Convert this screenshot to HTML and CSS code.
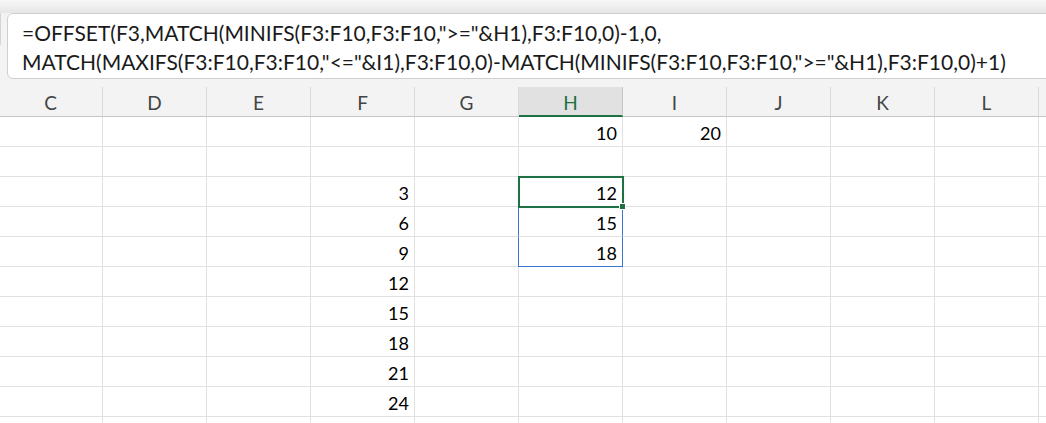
FILE: index.html
```html
<!DOCTYPE html>
<html>
<head>
<meta charset="utf-8">
<link rel="stylesheet" href="styles.css">
</head>
<body>
<div class="app">
  <div class="topstrip"></div>
  <div class="fbar">
    <div class="namebox"></div>
    <div class="formula">=OFFSET(F3,MATCH(MINIFS(F3:F10,F3:F10,"&gt;="&amp;H1),F3:F10,0)-1,0,<br>MATCH(MAXIFS(F3:F10,F3:F10,"&lt;="&amp;I1),F3:F10,0)-MATCH(MINIFS(F3:F10,F3:F10,"&gt;="&amp;H1),F3:F10,0)+1)</div>
  </div>
  <div class="sheet">
    <div class="hdr">C</div><div class="hdr">D</div><div class="hdr">E</div><div class="hdr">F</div><div class="hdr">G</div><div class="hdr hsel">H</div><div class="hdr">I</div><div class="hdr">J</div><div class="hdr">K</div><div class="hdr">L</div><div class="hdr"></div>

    <div class="c"></div><div class="c"></div><div class="c"></div><div class="c"></div><div class="c"></div><div class="c">10</div><div class="c">20</div><div class="c"></div><div class="c"></div><div class="c"></div><div class="c"></div>
    <div class="c"></div><div class="c"></div><div class="c"></div><div class="c"></div><div class="c"></div><div class="c"></div><div class="c"></div><div class="c"></div><div class="c"></div><div class="c"></div><div class="c"></div>
    <div class="c"></div><div class="c"></div><div class="c"></div><div class="c">3</div><div class="c"></div><div class="c active">12<span class="handle"></span></div><div class="c"></div><div class="c"></div><div class="c"></div><div class="c"></div><div class="c"></div>
    <div class="c"></div><div class="c"></div><div class="c"></div><div class="c">6</div><div class="c"></div><div class="c spill">15</div><div class="c"></div><div class="c"></div><div class="c"></div><div class="c"></div><div class="c"></div>
    <div class="c"></div><div class="c"></div><div class="c"></div><div class="c">9</div><div class="c"></div><div class="c spill spill-end">18</div><div class="c"></div><div class="c"></div><div class="c"></div><div class="c"></div><div class="c"></div>
    <div class="c"></div><div class="c"></div><div class="c"></div><div class="c">12</div><div class="c"></div><div class="c"></div><div class="c"></div><div class="c"></div><div class="c"></div><div class="c"></div><div class="c"></div>
    <div class="c"></div><div class="c"></div><div class="c"></div><div class="c">15</div><div class="c"></div><div class="c"></div><div class="c"></div><div class="c"></div><div class="c"></div><div class="c"></div><div class="c"></div>
    <div class="c"></div><div class="c"></div><div class="c"></div><div class="c">18</div><div class="c"></div><div class="c"></div><div class="c"></div><div class="c"></div><div class="c"></div><div class="c"></div><div class="c"></div>
    <div class="c"></div><div class="c"></div><div class="c"></div><div class="c">21</div><div class="c"></div><div class="c"></div><div class="c"></div><div class="c"></div><div class="c"></div><div class="c"></div><div class="c"></div>
    <div class="c"></div><div class="c"></div><div class="c"></div><div class="c">24</div><div class="c"></div><div class="c"></div><div class="c"></div><div class="c"></div><div class="c"></div><div class="c"></div><div class="c"></div>
    <div class="c"></div><div class="c"></div><div class="c"></div><div class="c"></div><div class="c"></div><div class="c"></div><div class="c"></div><div class="c"></div><div class="c"></div><div class="c"></div><div class="c"></div>
  </div>
</div>
</body>
</html>
```

FILE: styles.css
```css
html, body {
  margin: 0;
  padding: 0;
  background: #ffffff;
  overflow: hidden;
}
.app {
  width: 1046px;
  height: 423px;
  overflow: hidden;
  font-family: "Lato", "Liberation Sans", sans-serif;
  color: #000;
}
.topstrip {
  height: 13px;
  background: linear-gradient(#f7f7f7, #e6e6e6);
}
.fbar {
  display: flex;
  background: #f3f3f3;
  padding-bottom: 8px;
  gap: 6px;
}
.namebox {
  width: 1px;
  height: 32px;
  border-right: 1px solid #d4d4d4;
  border-bottom: 1px solid #d4d4d4;
  border-bottom-right-radius: 4px;
  background: #fff;
  box-sizing: border-box;
}
.formula {
  flex: 1;
  margin-right: -20px;
  background: #fff;
  border: 1px solid #cfcfcf;
  border-radius: 6px;
  box-sizing: border-box;
  height: 66px;
  padding: 4px 0 0 14px;
  font-size: 21px;
  line-height: 29px;
  white-space: nowrap;
  color: #1a1a1a;
}
.sheet {
  display: grid;
  grid-template-columns: repeat(11, 104px);
  grid-auto-rows: 30px;
  margin-left: -1px;
  background: #fff;
}
.hdr {
  background: #f3f3f3;
  border-right: 1px solid #dadada;
  border-bottom: 1px solid #c6c6c6;
  box-sizing: border-box;
  display: flex;
  align-items: center;
  justify-content: center;
  font-size: 19px;
  color: #444;
  padding-top: 1px;
}
.hsel {
  background: #e1e1e1;
  color: #1e7145;
  border-bottom: 2px solid #1e7145;
  border-right-color: #c6c6c6;
  padding-top: 2px;
}
.c {
  position: relative;
  border-right: 1px solid #e1e1e1;
  border-bottom: 1px solid #e1e1e1;
  box-sizing: border-box;
  display: flex;
  align-items: center;
  justify-content: flex-end;
  padding-right: 5px;
  font-size: 18px;
  padding-top: 2px;
}
.active {
  outline: 2px solid #1e7145;
  outline-offset: -1px;
  z-index: 2;
  box-shadow: 0 0 4px rgba(0,0,0,0.12);
}
.handle {
  position: absolute;
  right: -4px;
  bottom: -4px;
  width: 5px;
  height: 5px;
  background: #1e7145;
  border: 1px solid #fff;
}
.spill {
  border-left: 1px solid #3b76d3;
  border-right: 1px solid #3b76d3;
  margin-left: -1px;
}
.spill-end {
  border-bottom: 1px solid #3b76d3;
}
```
